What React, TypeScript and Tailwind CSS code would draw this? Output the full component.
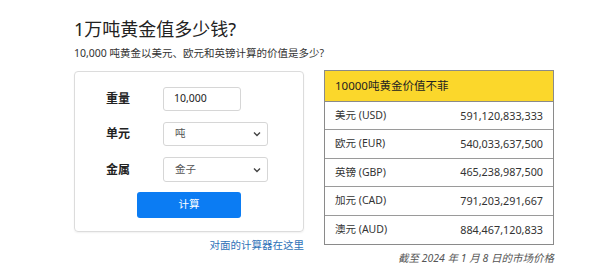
const rows = [
  ["美元 (USD)", "591,120,833,333"],
  ["欧元 (EUR)", "540,033,637,500"],
  ["英镑 (GBP)", "465,238,987,500"],
  ["加元 (CAD)", "791,203,291,667"],
  ["澳元 (AUD)", "884,467,120,833"],
];

function Chevron() {
  return (
    <svg width="8" height="6" viewBox="0 0 8 6" className="text-[#444]">
      <path d="M1 1.5 L4 4.5 L7 1.5" fill="none" stroke="currentColor" strokeWidth="1.4" />
    </svg>
  );
}

export default function App() {
  return (
    <div
      className="w-[600px] h-[274px] bg-white overflow-hidden pl-[74px] pt-[16px] text-[#222]"
      style={{ fontFamily: '"Noto Sans", "Noto Sans CJK SC", sans-serif' }}
    >
      {/* Heading */}
      <h1 className="text-[18px] leading-[26px] text-[#222]">1万吨黄金值多少钱?</h1>
      <p className="mt-[4px] text-[10.5px] leading-[14px] text-[#333]">
        10,000 吨黄金以美元、欧元和英镑计算的价值是多少?
      </p>

      <div className="mt-[10px] flex gap-[20px] items-start">
        {/* Calculator */}
        <div className="w-[230px] flex flex-col">
          <div className="h-[161px] mt-[1px] border border-[#dcdcdc] rounded-[4px] shadow-[0_1px_2px_rgba(0,0,0,0.06)] flex flex-col pt-[15px]">
            <div className="flex items-center h-[24px]">
              <span className="w-[88px] pl-[31px] text-[12px] font-bold text-[#222]">重量</span>
              <div className="w-[78px] h-[24px] border border-[#d6d6d6] rounded-[3px] flex items-center pl-[10px] text-[10.5px] text-[#222]">
                10,000
              </div>
            </div>
            <div className="flex items-center h-[24px] mt-[11px]">
              <span className="w-[88px] pl-[31px] text-[12px] font-bold text-[#222]">单元</span>
              <div className="w-[105px] h-[24px] border border-[#d6d6d6] rounded-[3px] flex items-center justify-between pl-[11px] pr-[6px] text-[10.5px] text-[#555]">
                <span>吨</span>
                <Chevron />
              </div>
            </div>
            <div className="flex items-center h-[25px] mt-[11px]">
              <span className="w-[88px] pl-[31px] text-[12px] font-bold text-[#222]">金属</span>
              <div className="w-[105px] h-[25px] border border-[#d6d6d6] rounded-[3px] flex items-center justify-between pl-[11px] pr-[6px] text-[10.5px] text-[#555]">
                <span>金子</span>
                <Chevron />
              </div>
            </div>
            <div className="flex justify-center mt-[10px]">
              <button className="w-[104px] h-[26px] rounded-[3px] bg-[#0b7cf3] text-white text-[10.5px] flex items-center justify-center">
                计算
              </button>
            </div>
          </div>
          <a href="#" className="self-end mt-[6px] text-[10.5px] leading-[14px] text-[#2f72b8]">
            对面的计算器在这里
          </a>
        </div>

        {/* Value table */}
        <div className="w-[230px] flex flex-col">
          <div className="border border-[#8a8a8a]">
            <div className="h-[31px] bg-[#fbd72b] border-b border-[#8a8a8a] flex items-center pl-[10px] text-[11.5px] text-[#222]">
              10000吨黄金价值不菲
            </div>
            {rows.map(([name, value], i) => (
              <div
                key={name}
                className={
                  "h-[28.4px] flex items-center justify-between pl-[10px] pr-[10px] text-[10.5px] text-[#333] " +
                  (i < rows.length - 1 ? "border-b border-[#9a9a9a]" : "")
                }
              >
                <span>{name}</span>
                <span className="text-[10.8px]">{value}</span>
              </div>
            ))}
          </div>
          <p className="self-end mt-[6px] text-[10.5px] italic text-[#555]">截至 2024 年 1 月 8 日的市场价格</p>
        </div>
      </div>
    </div>
  );
}
